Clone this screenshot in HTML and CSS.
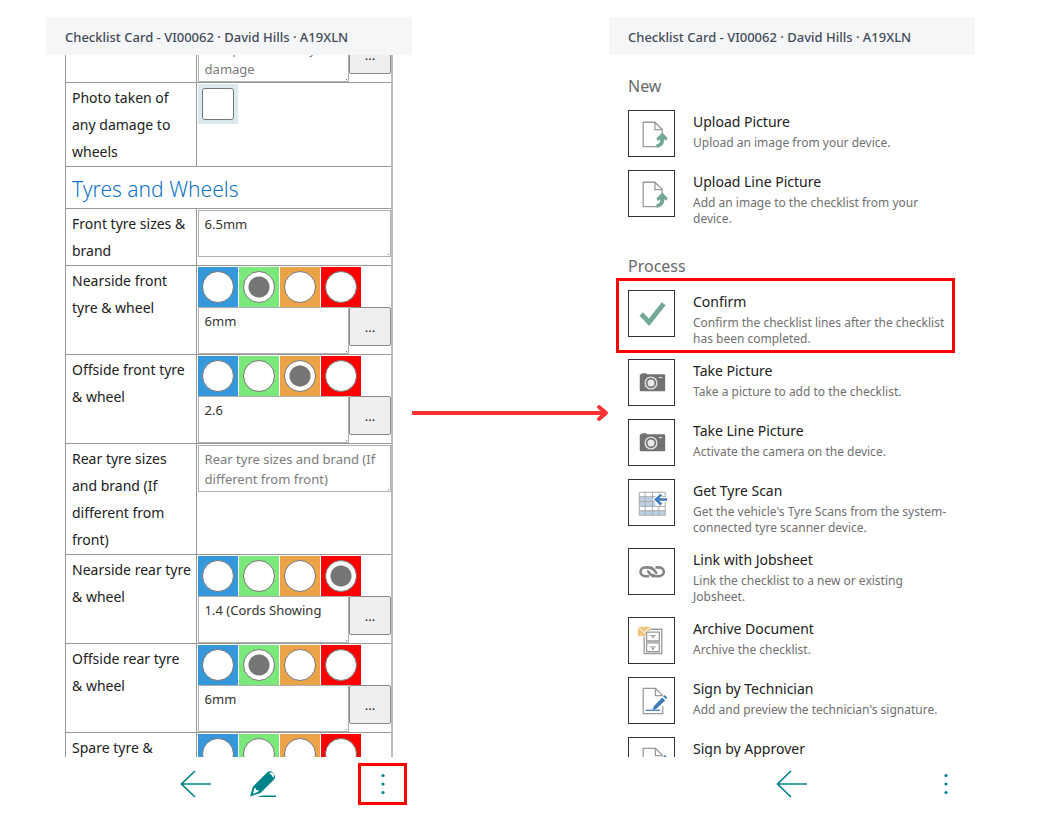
FILE: index.html
```
<!DOCTYPE html>
<html lang="en">
<head>
<meta charset="utf-8">
<title>Checklist Card</title>
<link rel="stylesheet" href="styles.css">
</head>
<body>
<svg class="symbols" aria-hidden="true">
  <symbol id="upload" viewBox="0 0 46 46"><path d="M28.500 36.500H14.500V11.500H26.500L34 19V24M26.500 11.500V19H34" fill="none" stroke="#999" stroke-width="1.300"/><path d="M34 22 39.500 27.500 38 30.500 36 29C36.300 34 33 37.500 28 37.500V34C31 34 32 32 31.700 29L29.500 31 28 28Z" fill="#74a797"/></symbol>
  <symbol id="check" viewBox="0 0 46 46"><path d="M12.500 23.500 20.500 32 35.500 13" fill="none" stroke="#74a797" stroke-width="5"/></symbol>
  <symbol id="camera" viewBox="0 0 46 46"><path d="M11 15.500q0-1 1-1H13V13.500H18V14.500H36q1 0 1 1V31q0 1-1 1H12q-1 0-1-1Z" fill="#717171"/><circle cx="22.500" cy="23.500" r="6" fill="none" stroke="#ddd" stroke-width="1.500"/><circle cx="22.500" cy="23.500" r="3.600" fill="#e9e9e9"/><path d="M30.500 18H34" stroke="#eee"/></symbol>
  <symbol id="scan" viewBox="0 0 46 46"><path d="M10.500 12.500H37V36H10.500Z" fill="#fff"/><path d="M10.500 17H27V27H10.500ZM10.500 31H37V36H10.500Z" fill="#bccfe5"/><path d="M10.500 12.500H37V36H10.500ZM10.500 17H37M10.500 22H37M10.500 27H37M10.500 31.500H37M16.500 12.500V36M24 12.500V36M30.500 12.500V36" fill="none" stroke="#aaa"/><path d="M39 20H29M32.500 15 27.500 20 32.500 25" fill="none" stroke="#fff" stroke-width="5"/><path d="M39 20H28M33 15 27.500 20 33 25" fill="none" stroke="#427dbb" stroke-width="2.600"/></symbol>
  <symbol id="link" viewBox="0 0 46 46"><g fill="none" stroke="#858585" stroke-width="2.600"><path d="M24 21C23 19 21 18.800 18 18.800H17C10 18.800 10 27.800 17 27.800H20.500"/><path d="M24 25.500C25 27.500 27 27.800 29 27.800H30C37.500 27.800 37.500 18.800 30 18.800H27"/><path d="M18.500 22.500C21 22.500 21 27.800 26 27.800M29 24.500C26 24.500 26 18.800 21 18.800"/></g></symbol>
  <symbol id="archive" viewBox="0 0 46 46"><path d="M22 11.500H33.500V36.500H15.500V19" fill="none" stroke="#999" stroke-width="1.300"/><path d="M18 14.500H31V23.500H18ZM18 25.500H31V34.500H18Z" fill="#fff" stroke="#999" stroke-width="1.300"/><path d="M21.500 18H27.500M21.500 29.500H27.500" stroke="#999"/><path d="M23 19H26L24.500 21ZM23 30.500H26L24.500 33Z" fill="#888"/><path d="M9 9H22V13H17V18.500H9Z" fill="#efc77c"/><path d="M9 9 15.500 15 22 9" fill="none" stroke="#fff"/></symbol>
  <symbol id="sign" viewBox="0 0 46 46"><path d="M34.500 18H27V10.500H14.500V36.500H34.500V29M27 10.500 34.500 18" fill="none" stroke="#999" stroke-width="1.300"/><path d="M17 33H32" stroke="#427dbb" stroke-width="1.300"/><path d="M24 33 25.500 28.500 34 20 37 23 28 31.500ZM35 19 36.500 17.500 39 20 37.800 21.800Z" fill="#427dbb"/></symbol>
  <symbol id="back" viewBox="0 0 32 28"><path d="M15 1 1.500 14 15 27M1.500 14H31" fill="none" stroke="#008489" stroke-width="1.700"/></symbol>
  <symbol id="more" viewBox="0 0 6 22"><g fill="#008489"><circle cx="3" cy="2.500" r="1.600"/><circle cx="3" cy="11" r="1.600"/><circle cx="3" cy="19.500" r="1.600"/></g></symbol>
  <symbol id="pencil" viewBox="0 0 28 28"><path d="M1 26.500 4 16.500 18 2.500C21-1 28 4 25.500 9L11.500 23Z" fill="#008489"/><path d="M21 4Q20 3 21.500 2.600C24 2 26 5 25 6.500Q24 8 23.500 6.500 23 4.500 21 4Z" fill="#fff"/><path d="M5.500 18Q7 17.500 7 20 10 19.500 9.500 21.500L4 24Z" fill="#fff"/><path d="M10 26.500 13.500 25.500H27V27H8Z" fill="#008489"/></symbol>
</svg>
<main class="stage">
  <section class="phone">
    <h1 class="title">Checklist Card - VI00062 · David Hills · A19XLN</h1>
    <div class="scroll">
      <table class="checklist">
        <tbody id="rows"></tbody>
      </table>
    </div>
    <nav class="toolbar">
      <button class="tool back" aria-label="Back"><svg><use href="#back"/></svg></button>
      <button class="tool edit" aria-label="Edit"><svg><use href="#pencil"/></svg></button>
      <button class="tool more marked" aria-label="More actions"><svg><use href="#more"/></svg></button>
    </nav>
  </section>
  <div class="flow">
    <span class="shaft"></span><svg class="head" viewBox="0 0 14 18"><path d="M4 3 11 9 4 15" fill="none" stroke="#ff3131" stroke-width="4" stroke-linecap="round" stroke-linejoin="round"/></svg>
  </div>
  <section class="phone">
    <h1 class="title">Checklist Card - VI00062 · David Hills · A19XLN</h1>
    <div class="scroll menu">
      <h2 class="group">New</h2>
      <button class="action"><svg class="icon"><use href="#upload"/></svg><span class="text"><span class="name">Upload Picture</span><span class="desc">Upload an image from your device.</span></span></button>
      <button class="action"><svg class="icon"><use href="#upload"/></svg><span class="text"><span class="name">Upload Line Picture</span><span class="desc">Add an image to the checklist from your device.</span></span></button>
      <h2 class="group">Process</h2>
      <button class="action chosen"><svg class="icon"><use href="#check"/></svg><span class="text"><span class="name">Confirm</span><span class="desc">Confirm the checklist lines after the checklist has been completed.</span></span></button>
      <button class="action"><svg class="icon"><use href="#camera"/></svg><span class="text"><span class="name">Take Picture</span><span class="desc">Take a picture to add to the checklist.</span></span></button>
      <button class="action"><svg class="icon"><use href="#camera"/></svg><span class="text"><span class="name">Take Line Picture</span><span class="desc">Activate the camera on the device.</span></span></button>
      <button class="action"><svg class="icon"><use href="#scan"/></svg><span class="text"><span class="name">Get Tyre Scan</span><span class="desc">Get the vehicle's Tyre Scans from the system-connected tyre scanner device.</span></span></button>
      <button class="action"><svg class="icon"><use href="#link"/></svg><span class="text"><span class="name">Link with Jobsheet</span><span class="desc">Link the checklist to a new or existing Jobsheet.</span></span></button>
      <button class="action"><svg class="icon"><use href="#archive"/></svg><span class="text"><span class="name">Archive Document</span><span class="desc">Archive the checklist.</span></span></button>
      <button class="action"><svg class="icon"><use href="#sign"/></svg><span class="text"><span class="name">Sign by Technician</span><span class="desc">Add and preview the technician's signature.</span></span></button>
      <button class="action"><svg class="icon"><use href="#sign"/></svg><span class="text"><span class="name">Sign by Approver</span></span></button>
    </div>
    <nav class="toolbar">
      <button class="tool back" aria-label="Back"><svg><use href="#back"/></svg></button>
      <button class="tool more" aria-label="More actions"><svg><use href="#more"/></svg></button>
    </nav>
  </section>
</main>
<script src="script.js"></script>
</body>
</html>
```
FILE: styles.css
```
* { box-sizing: border-box; }
body { margin: 0; background: #fff; font-family: "Segoe UI", "Noto Sans", sans-serif; color: #212121; }
button, textarea { font-family: inherit; margin: 0; }
.symbols { display: none; }
.stage { display: grid; grid-template-columns: 366fr 197fr 366fr; height: 100vh; padding: 17px 73px 27px 46px; }
.phone { display: flex; flex-direction: column; min-width: 0; min-height: 0; }
.title { flex: none; margin: 0; padding: 2px 19px 0; background: #f5f6f8; color: #434b59; font-size: 13px; font-weight: 500; line-height: 36px; white-space: nowrap; }
.scroll { flex: 1; min-height: 0; overflow: hidden; padding: 0 19px; }

.checklist { width: 100%; margin-top: -62px; border-collapse: collapse; table-layout: fixed; }
.checklist th, .checklist td { border: 1px solid #999; vertical-align: top; text-align: left; }
.checklist .label { width: 40%; padding: 1px 3px 1px 6px; font-size: 14px; font-weight: 400; line-height: 27px; }
.checklist .value { padding: 1px 0 0 1px; border-right: 2px solid #bdbdbd; }
.checklist .heading { padding: 3px 6px 0; border-right: 2px solid #bdbdbd; color: #0f74c8; font-size: 21px; font-weight: 300; line-height: 38px; }
.rating { display: flex; gap: 1px; }
.tile { display: grid; place-items: center; width: 40px; height: 40px; }
.blue { background: #3498db; }
.green { background: #7be87b; }
.amber { background: #eca347; }
.red { background: #f00; }
.pale { background: #dce8ef; }
.dot, .tick { appearance: none; margin: 0; width: 32px; height: 32px; background: #fff; border: 1px solid #767676; }
.dot { border-radius: 50%; }
.tick { border-radius: 3px; }
.dot:checked { background: radial-gradient(circle, #757575 10px, #fff 11px); }
.entry { display: flex; align-items: flex-start; }
.note { flex: 1; min-width: 0; height: 47px; padding: 3px 6px; border: 1px solid #b0b0b0; outline: 0; resize: none; overflow: hidden; color: #333; font-size: 13px; line-height: 20px; background: linear-gradient(#777, #777) right 1px bottom 1px / 1px 1px no-repeat #fff; }
.note::placeholder { color: #7b7b7b; opacity: 1; }
.lookup { flex: none; width: 42px; height: 39px; padding: 0; border: 1px solid #8a8a8a; border-radius: 2px; background: #efefef; color: #222; font-size: 13px; }

.toolbar { flex: none; display: grid; grid-template-columns: 1fr 32px 1fr; align-items: center; height: 53px; }
.tool { display: grid; place-items: center; padding: 0; border: 0; background: none; }
.tool svg { display: block; }
.back { grid-column: 2; }
.back svg { width: 32px; height: 28px; }
.more { grid-column: 3; grid-row: 1; justify-self: end; width: 49px; height: 42px; margin-right: 5px; }
.more svg { width: 6px; height: 22px; }
.edit svg { width: 28px; height: 28px; }
.phone:first-child .toolbar { grid-template-columns: 134fr 32px 37px 28px 135fr; }
.phone:first-child .edit { grid-column: 4; }
.phone:first-child .more { grid-column: 5; }
.marked { border: 3px solid #f00; }

.flow { display: flex; align-items: center; height: 18px; margin-top: 387px; }
.shaft { flex: 1; height: 4px; margin-right: -12px; background: #ff3131; }
.head { flex: none; width: 14px; height: 18px; }

.menu { display: flex; flex-direction: column; }
.group { flex: none; margin: 19px 0 12px; color: #6a6a6a; font-size: 16px; font-weight: 400; line-height: 24px; }
.action + .group { margin-top: 15px; }
.action { position: relative; flex: none; display: flex; gap: 18px; align-items: flex-start; min-height: 48px; margin: 0 0 12px; padding: 0; border: 0; background: none; color: inherit; text-align: left; }
.icon { flex: none; width: 47px; height: 47px; border: 1px solid #333; }
.text { display: flex; flex-direction: column; gap: 2px; width: 254px; }
.name { font-size: 14px; line-height: 23px; }
.desc { color: #707070; font-size: 12px; line-height: 16px; }
.chosen::after { content: ""; position: absolute; inset: -12px 1px -6px -12px; border: 3px solid #f00; }
```
FILE: script.js
```
const rows = [
  { label: "", rated: true, hint: "Add photos of any damage", button: true },
  { label: "Photo taken of any damage to wheels", tick: true },
  { heading: "Tyres and Wheels" },
  { label: "Front tyre sizes & brand", text: "6.5mm" },
  { label: "Nearside front tyre & wheel", rated: true, pick: 1, text: "6mm", button: true },
  { label: "Offside front tyre & wheel", rated: true, pick: 2, text: "2.6", button: true },
  { label: "Rear tyre sizes and brand (If different from front)", hint: "Rear tyre sizes and brand (If different from front)" },
  { label: "Nearside rear tyre & wheel", rated: true, pick: 3, text: "1.4 (Cords Showing", button: true },
  { label: "Offside rear tyre & wheel", rated: true, pick: 1, text: "6mm", button: true },
  { label: "Spare tyre & wheel", rated: true, text: "", button: true }
];
const colours = ["blue", "green", "amber", "red"];
const safe = s => s.replace(/&/g, "&amp;");

document.getElementById("rows").innerHTML = rows.map((r, i) => {
  if (r.heading) return `<tr><th class="heading" colspan="2">${r.heading}</th></tr>`;
  const label = safe(r.label) || "Wheels";
  const rating = r.rated ? `<div class="rating">${colours.map((c, n) =>
    `<span class="tile ${c}"><input class="dot" type="radio" name="r${i}" aria-label="${label}: ${c}"${r.pick === n ? " checked" : ""}></span>`).join("")}</div>` : "";
  const tick = r.tick ? `<span class="tile pale"><input class="tick" type="checkbox" aria-label="${label}"></span>` : "";
  const entry = r.tick ? "" : `<div class="entry"><textarea class="note" aria-label="${label}" placeholder="${safe(r.hint || "")}">${r.text || ""}</textarea>${
    r.button ? `<button class="lookup" aria-label="Options">...</button>` : ""}</div>`;
  return `<tr><th class="label" scope="row">${safe(r.label)}</th><td class="value">${rating}${tick}${entry}</td></tr>`;
}).join("");
```
